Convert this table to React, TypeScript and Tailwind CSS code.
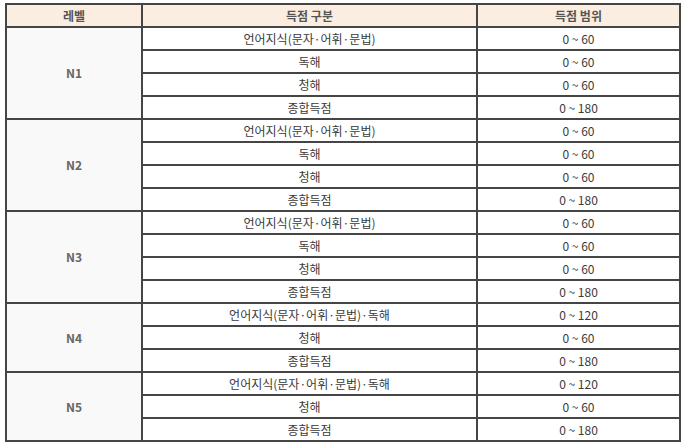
type Row = { part: string; range: string }
type Level = { name: string; rows: Row[] }

const full = [
  { part: '언어지식(문자·어휘·문법)', range: '0 ~ 60' },
  { part: '독해', range: '0 ~ 60' },
  { part: '청해', range: '0 ~ 60' },
  { part: '종합득점', range: '0 ~ 180' },
]

const short = [
  { part: '언어지식(문자·어휘·문법)·독해', range: '0 ~ 120' },
  { part: '청해', range: '0 ~ 60' },
  { part: '종합득점', range: '0 ~ 180' },
]

const levels: Level[] = [
  { name: 'N1', rows: full },
  { name: 'N2', rows: full },
  { name: 'N3', rows: full },
  { name: 'N4', rows: short },
  { name: 'N5', rows: short },
]

const cell = 'h-[23px] border-2 border-[#454545] p-0 text-center align-middle'

export default function App() {
  return (
    <div className="min-h-[446px] w-[684px] bg-white pl-[5px] pt-[3px] font-['Noto_Sans_CJK_KR','Noto_Sans',sans-serif] text-[12px] leading-none text-[#3a3a3a]">
      <table className="w-[674px] table-fixed border-collapse">
        <colgroup>
          <col className="w-[136px]" />
          <col className="w-[335px]" />
          <col className="w-[203px]" />
        </colgroup>
        <thead>
          <tr className="bg-[#fbeddf]">
            <th className={`${cell} font-bold text-[#555]`}>레벨</th>
            <th className={`${cell} font-bold text-[#555]`}>득점 구분</th>
            <th className={`${cell} font-bold text-[#555]`}>득점 범위</th>
          </tr>
        </thead>
        <tbody>
          {levels.map((lv) =>
            lv.rows.map((r, i) => (
              <tr key={lv.name + i}>
                {i === 0 && (
                  <td
                    rowSpan={lv.rows.length}
                    className={`${cell} bg-[#f9f9f9] font-bold text-[#666]`}
                  >
                    {lv.name}
                  </td>
                )}
                <td className={cell}>{r.part}</td>
                <td className={cell}>{r.range}</td>
              </tr>
            ))
          )}
        </tbody>
      </table>
    </div>
  )
}
